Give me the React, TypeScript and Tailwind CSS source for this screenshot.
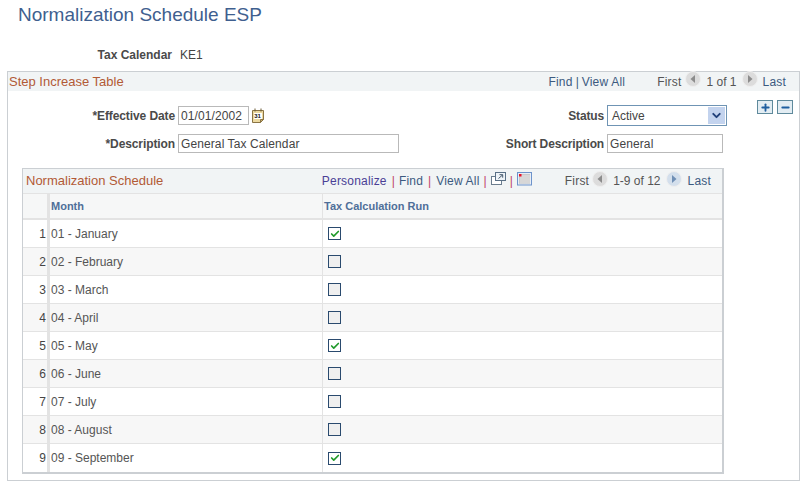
import { Check, Plus, Minus, ChevronDown } from 'lucide-react';

const rows = [
  { n: 1, month: '01 - January', on: true },
  { n: 2, month: '02 - February', on: false },
  { n: 3, month: '03 - March', on: false },
  { n: 4, month: '04 - April', on: false },
  { n: 5, month: '05 - May', on: true },
  { n: 6, month: '06 - June', on: false },
  { n: 7, month: '07 - July', on: false },
  { n: 8, month: '08 - August', on: false },
  { n: 9, month: '09 - September', on: true },
];

function Arrow({ dir, active }: { dir: 'left' | 'right'; active?: boolean }) {
  return (
    <svg width="16" height="16" viewBox="0 0 16 16" className="mb-[5px]">
      <circle cx="8" cy="8" r="7.500" fill={active ? '#d3dfec' : '#dcdcdc'} stroke="#efefef" />
      <path d={dir === 'left' ? 'M10 4v8l-4.500-4z' : 'M6 4v8l4.500-4z'} fill={active ? '#6f8fb5' : '#8c8c8c'} />
    </svg>
  );
}

function CalendarIcon() {
  return (
    <svg width="14" height="16" viewBox="0 0 14 16">
      <path d="M1.500 2.500h11v9l-3 3h-8z" fill="#ecd9a0" stroke="#8a7444" />
      <path d="M9.500 14.500v-3h3z" fill="#c9b070" stroke="#8a7444" />
      <path d="M4 .5v3M10 .5v3" stroke="#6b5a34" />
      <rect x="3" y="5" width="8" height="6" fill="#fff" />
      <text x="3.200" y="10.400" fontSize="6" fontWeight="700" fill="#111" fontFamily="Liberation Sans, sans-serif">31</text>
    </svg>
  );
}

function PopupIcon() {
  return (
    <svg width="15" height="14" viewBox="0 0 15 14">
      <rect x=".5" y="4.500" width="10" height="8" fill="#fff" stroke="#6b7d8e" />
      <rect x="4.500" y=".5" width="10" height="8" fill="#eef3f7" stroke="#5a7086" />
      <path d="M7.500 6.500l4-3.500M8.500 2.700h3.200v3" stroke="#44586c" fill="none" />
    </svg>
  );
}

function GridIcon() {
  return (
    <svg width="15" height="14" viewBox="0 0 15 14">
      <rect x=".5" y=".5" width="14" height="12.500" fill="#e8eef6" stroke="#6d93cb" />
      <rect x="2" y="2" width="11" height="9.500" fill="#b4b4b4" />
      <path d="M4 2v9.500M6 2v9.500M8 2v9.500M10 2v9.500M12 2v9.500M2 4h11M2 6h11M2 8h11M2 10h11" stroke="#f0f0f0" strokeWidth=".7" />
      <rect x="2" y="2" width="2.500" height="2.500" fill="#e8102a" />
    </svg>
  );
}

function TextInput({ value, className }: { value: string; className: string }) {
  return (
    <div className={`flex h-[19px] items-center border border-[#b9b9b9] bg-white pl-[2px] text-[12px] tracking-[0.1px] text-[#444] ${className}`}>
      {value}
    </div>
  );
}

function SquareButton({ children }: { children: React.ReactNode }) {
  return (
    <div className="flex h-[14px] w-[16px] items-center justify-center border border-[#5f8a9c] bg-[#e3edf3] text-[#1f5fa0]">
      {children}
    </div>
  );
}

export default function App() {
  return (
    <div className="h-[486px] w-[807px] overflow-hidden bg-white text-[12px] text-[#444]" style={{ fontFamily: '"Liberation Sans", Arial, sans-serif' }}>
      <h1 className="ml-[18px] pt-[3px] text-[19px] leading-[24px] text-[#3f5f8f]">Normalization Schedule ESP</h1>

      <div className="mt-[21px] flex h-[14px] items-center leading-[14px]">
        <span className="w-[172px] text-right font-bold text-[#4a4a4a]">Tax Calendar</span>
        <span className="ml-[8px]">KE1</span>
      </div>

      <div className="ml-[7px] mt-[9px] h-[410px] w-[793px] border border-[#cbcfd3]">
        <div className="flex h-[19px] items-center bg-[#f1f4f5] pl-[1px]">
          <span className="text-[13px] text-[#b25a36]">Step Increase Table</span>
          <div className="ml-auto flex items-center pr-[13px] text-[#3c5a80]">
            <span className="tracking-[0.2px]">Find</span>
            <span className="mx-[3px]">|</span>
            <span className="tracking-[0.2px]">View All</span>
            <span className="ml-[32px] tracking-[0.2px] text-[#555]">First</span>
            <span className="ml-[4px] mr-[5px] flex"><Arrow dir="left" /></span>
            <span className="text-[#555]">1 of 1</span>
            <span className="ml-[5px] mr-[5px] flex"><Arrow dir="right" /></span>
            <span className="tracking-[0.2px]">Last</span>
          </div>
        </div>

        <div className="relative h-[77px]">
          <div className="absolute right-[6px] top-[9px] flex gap-[4px]">
            <SquareButton><Plus size={11} strokeWidth={4} /></SquareButton>
            <SquareButton><Minus size={11} strokeWidth={4} /></SquareButton>
          </div>
          <div className="flex pt-[15px]">
            <div className="flex w-[392px] flex-col gap-[9px]">
              <div className="flex h-[19px] items-center">
                <span className="w-[167px] text-right font-bold tracking-[-0.1px] text-[#4a4a4a]">*Effective Date</span>
                <TextInput value="01/01/2002" className="ml-[3px] w-[71px]" />
                <span className="ml-[2px] flex"><CalendarIcon /></span>
              </div>
              <div className="flex h-[19px] items-center">
                <span className="w-[167px] text-right font-bold tracking-[-0.1px] text-[#4a4a4a]">*Description</span>
                <TextInput value="General Tax Calendar" className="ml-[3px] w-[221px]" />
              </div>
            </div>
            <div className="flex flex-col gap-[9px]">
              <div className="flex h-[19px] items-center">
                <span className="w-[204px] text-right font-bold tracking-[-0.15px] text-[#4a4a4a]">Status</span>
                <div className="ml-[3px] flex h-[21px] w-[120px] items-center justify-between border border-[#6f94b4] bg-white pl-[4px] pr-[1px]">
                  <span>Active</span>
                  <span className="flex h-[17px] w-[17px] items-center justify-center bg-[#c3d3ee] text-[#21407a]">
                    <ChevronDown size={13} strokeWidth={3.5} />
                  </span>
                </div>
              </div>
              <div className="flex h-[19px] items-center">
                <span className="w-[204px] text-right font-bold tracking-[-0.15px] text-[#4a4a4a]">Short Description</span>
                <TextInput value="General" className="ml-[3px] w-[116px]" />
              </div>
            </div>
          </div>
        </div>

        <div className="ml-[14px] w-[702px] border-b-[2px] border-l-[1px] border-r-[2px] border-t-[1px] border-[#cbcfd3]">
          <div className="flex h-[24px] items-center bg-[#f1f4f5] pl-[3px]">
            <span className="text-[13px] text-[#b25a36]">Normalization Schedule</span>
            <div className="ml-auto flex items-center pr-[11px] text-[#4a3f96]">
              <span className="tracking-[0.2px]">Personalize</span>
              <span className="ml-[5px] mr-[4px] text-[#c0406a]">|</span>
              <span className="tracking-[0.2px] text-[#3c5a80]">Find</span>
              <span className="mx-[5px] text-[#c0406a]">|</span>
              <span className="tracking-[0.2px] text-[#3c5a80]">View All</span>
              <span className="mx-[4px] text-[#c0406a]">|</span>
              <span className="mb-[5px] flex"><PopupIcon /></span>
              <span className="mx-[4px] text-[#c0406a]">|</span>
              <span className="mb-[5px] flex"><GridIcon /></span>
              <span className="ml-[33px] tracking-[0.2px] text-[#555]">First</span>
              <span className="ml-[3px] mr-[5px] flex"><Arrow dir="left" /></span>
              <span className="text-[#555]">1-9 of 12</span>
              <span className="ml-[5px] mr-[6px] flex"><Arrow dir="right" active /></span>
              <span className="tracking-[0.2px] text-[#3c5a80]">Last</span>
            </div>
          </div>

          <div className="flex h-[27px] border-b-[2px] border-t border-[#e3e3e3] bg-[#f6f7f7] text-[11px] font-bold text-[#4f6f99]">
            <div className="w-[24px]" />
            <div className="flex w-[275px] items-center border-l-[3px] border-[#e3e3e3] pl-[1px]">Month</div>
            <div className="flex items-center border-l border-[#e3e3e3] pl-[1px]">Tax Calculation Run</div>
          </div>

          {rows.map((r) => (
            <div key={r.n} className={`flex h-[28px] border-b border-[#e3e3e3] last:border-b-0 ${r.n % 2 === 0 ? 'bg-[#f7f7f7]' : 'bg-white'}`}>
              <div className="flex w-[24px] items-center justify-end pr-[1px] text-[12px]">{r.n}</div>
              <div className="flex w-[275px] items-center border-l-[3px] border-[#e3e3e3] pl-[1px] text-[#555]">{r.month}</div>
              <div className="flex items-center border-l border-[#e3e3e3] pl-[5px]">
                <span className={`flex h-[13px] w-[13px] items-center justify-center border border-[#2a4a6e] ${r.on ? 'bg-white' : 'bg-[#efefef]'}`}>
                  {r.on && <Check size={10} strokeWidth={4} className="text-[#1f9a2a]" />}
                </span>
              </div>
            </div>
          ))}
        </div>
      </div>
    </div>
  );
}
